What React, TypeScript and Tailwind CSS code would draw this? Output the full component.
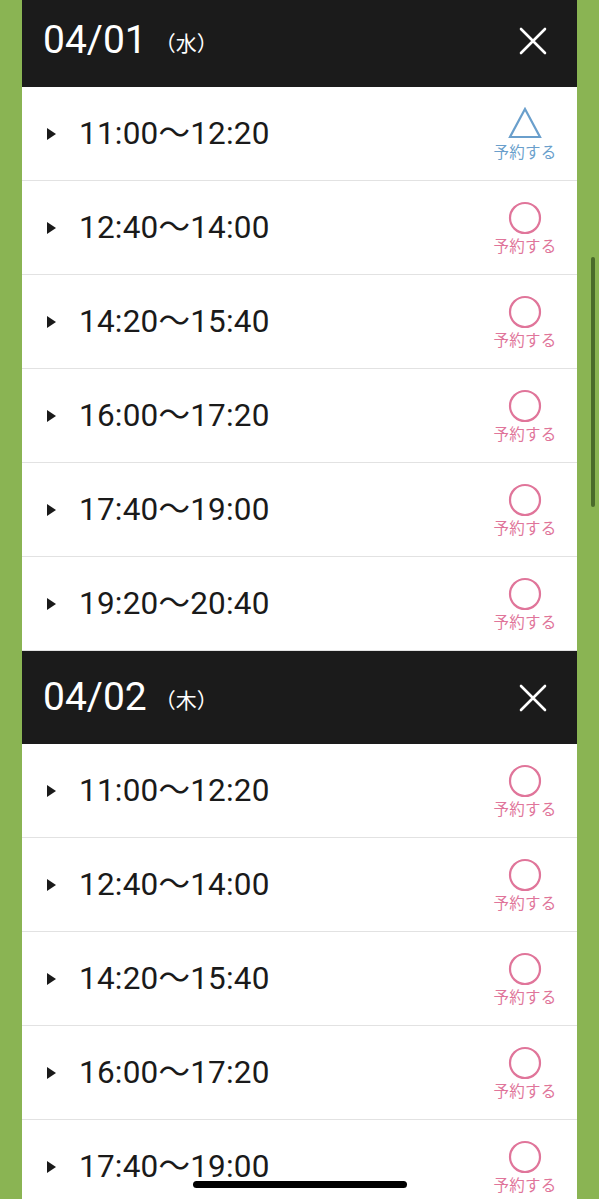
import React from "react";

type Slot = { time: string; mark: "circle" | "triangle" };

const day1: Slot[] = [
  { time: "11:00〜12:20", mark: "triangle" },
  { time: "12:40〜14:00", mark: "circle" },
  { time: "14:20〜15:40", mark: "circle" },
  { time: "16:00〜17:20", mark: "circle" },
  { time: "17:40〜19:00", mark: "circle" },
  { time: "19:20〜20:40", mark: "circle" },
];
const day2: Slot[] = [
  { time: "11:00〜12:20", mark: "circle" },
  { time: "12:40〜14:00", mark: "circle" },
  { time: "14:20〜15:40", mark: "circle" },
  { time: "16:00〜17:20", mark: "circle" },
  { time: "17:40〜19:00", mark: "circle" },
];

const font = { fontFamily: 'Roboto, "Noto Sans CJK JP", sans-serif' };

function Header({ date, dow, first }: { date: string; dow: string; first?: boolean }) {
  return (
    <div
      className={`flex h-[93px] items-center justify-between bg-[#1b1b1b] pl-[21px] pr-[30px] ${first ? "-mt-[6px]" : ""}`}
    >
      <div className="flex items-center text-white">
        <span className="text-[39px] leading-none tracking-[0px]">{date}</span>
        <span
          className="ml-[8px] mt-[4px] text-[21px] leading-none"
          style={{ fontFamily: '"Noto Sans CJK JP", sans-serif' }}
        >
          （{dow}）
        </span>
      </div>
      <svg width="28" height="28" viewBox="0 0 28 28">
        <path d="M2 2 L26 26 M26 2 L2 26" stroke="#fff" strokeWidth="2.6" strokeLinecap="round" />
      </svg>
    </div>
  );
}

function Row({ slot }: { slot: Slot }) {
  const isTri = slot.mark === "triangle";
  const color = isTri ? "text-[#6a9fcc]" : "text-[#e0759a]";
  return (
    <div className="flex h-[94px] items-center justify-between border-b border-[#e2e2e2] bg-white pl-[25px] pr-[16px]">
      <div className="flex items-center">
        <svg width="9" height="12" viewBox="0 0 9 12" className="mt-[1px]">
          <path d="M0 0 L9 6 L0 12 Z" fill="#1a1a1a" />
        </svg>
        <span className="ml-[23px] text-[31.5px] leading-none tracking-[0.2px] text-[#1a1a1a]">{slot.time}</span>
      </div>
      <div className={`flex w-[72px] flex-col items-center ${color}`}>
        {isTri ? (
          <svg width="34" height="32" viewBox="0 0 34 32" className="mb-[5px]">
            <path d="M17 2 L32 30 L2 30 Z" fill="none" stroke="currentColor" strokeWidth="2.2" strokeLinejoin="miter" />
          </svg>
        ) : (
          <svg width="34" height="34" viewBox="0 0 34 34" className="mb-[3px]">
            <circle cx="17" cy="17" r="15" fill="none" stroke="currentColor" strokeWidth="2.2" />
          </svg>
        )}
        <span
          className="text-[15.5px] leading-none tracking-[0.3px]"
          style={{ fontFamily: '"Noto Sans CJK JP", sans-serif' }}
        >
          予約する
        </span>
      </div>
    </div>
  );
}

export default function App() {
  return (
    <div className="relative h-[1199px] w-[599px] overflow-hidden bg-[#8ab453]" style={font}>
      <div className="mx-[22px] flex flex-col">
        <Header date="04/01" dow="水" first />
        {day1.map((s, i) => (
          <Row key={"a" + i} slot={s} />
        ))}
        <Header date="04/02" dow="木" />
        {day2.map((s, i) => (
          <Row key={"b" + i} slot={s} />
        ))}
      </div>
      <div className="absolute left-[591px] top-[257px] h-[250px] w-[4px] rounded-full bg-[#4b6b2b]" />
      <div className="absolute left-[193px] top-[1181px] h-[7px] w-[214px] rounded-full bg-black" />
    </div>
  );
}
